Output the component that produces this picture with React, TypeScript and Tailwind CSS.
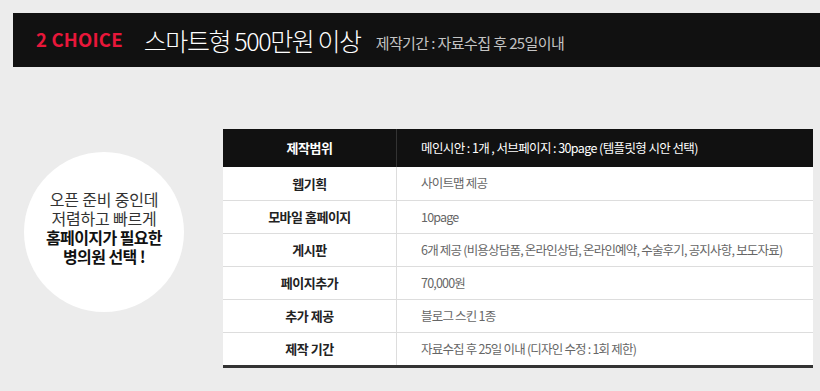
import React from 'react';

const rows = [
  { label: '웹기획', value: '사이트맵 제공' },
  { label: '모바일 홈페이지', value: '10page' },
  { label: '게시판', value: '6개 제공 (비용상담폼, 온라인상담, 온라인예약, 수술후기, 공지사항, 보도자료)' },
  { label: '페이지추가', value: '70,000원' },
  { label: '추가 제공', value: '블로그 스킨 1종' },
  { label: '제작 기간', value: '자료수집 후 25일 이내 (디자인 수정 : 1회 제한)' },
];

const font = "font-['Noto_Sans_CJK_KR','Noto_Sans',sans-serif]";

export default function App() {
  return (
    <div className={`h-[391px] w-[820px] overflow-hidden bg-[#ececec] ${font}`}>
      {/* Header bar */}
      <div className="ml-[13px] mt-[13px] flex h-[54px] items-center bg-[#111111] pl-[23px]">
        <span className="text-[18.5px] font-bold tracking-[0.2px] text-[#e8173a]">2 CHOICE</span>
        <span className="ml-[21px] text-[25px] font-light leading-none tracking-[-1.4px] text-white">스마트형 500만원 이상</span>
        <span className="ml-[15px] mt-[4px] text-[15px] leading-none tracking-[-0.6px] text-[#c4c4c4]">제작기간 : 자료수집 후 25일이내</span>
      </div>

      <div className="flex items-start pl-[24px] pt-[62px]">
        {/* Circle */}
        <div className="mt-[23px] flex h-[160px] w-[160px] shrink-0 flex-col items-center justify-center rounded-full bg-white pb-[8px] text-center text-[16px] leading-[19px] tracking-[-0.2px] text-[#333]">
          <span>오픈 준비 중인데</span>
          <span>저렴하고 빠르게</span>
          <span className="font-bold tracking-[-0.6px] text-[#111]">홈페이지가 필요한</span>
          <span className="font-bold tracking-[-0.6px] text-[#111]">병의원 선택 !</span>
        </div>

        {/* Table */}
        <div className="ml-[39px] w-[590px] border-b-[3px] border-[#333] bg-white text-[13px]">
          <div className="flex h-[38px] items-center bg-[#111111] text-white">
            <div className="flex h-full w-[174px] items-center justify-center border-r border-[#333] font-bold tracking-[-0.5px]">제작범위</div>
            <div className="pl-[24px] text-[12.5px] tracking-[-0.6px]">메인시안 : 1개 , 서브페이지 : 30page (템플릿형 시안 선택)</div>
          </div>
          {rows.map((r, i) => (
            <div key={i} className={`flex h-[33px] items-center ${i > 0 ? 'border-t border-[#dddddd]' : ''}`}>
              <div className="flex h-full w-[174px] items-center justify-center border-r border-[#dddddd] font-bold tracking-[-0.5px] text-[#222]">{r.label}</div>
              <div className="pl-[24px] text-[12.5px] tracking-[-0.8px] text-[#666]">{r.value}</div>
            </div>
          ))}
        </div>
      </div>
    </div>
  );
}
